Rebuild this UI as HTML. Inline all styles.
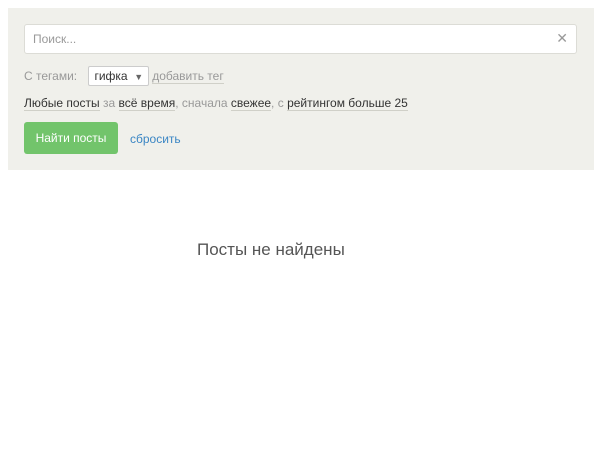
<!DOCTYPE html><html><head><style>
body{margin:0;background:#fff;font-family:"Liberation Sans","DejaVu Sans",sans-serif;width:600px;height:469px;overflow:hidden;position:relative}
.panel{position:absolute;left:8px;top:8px;width:586px;height:162px;background:#f0f0eb}
.inp{position:absolute;left:16px;top:16px;width:551px;height:28px;background:#fff;border:1px solid #dcdcd6;border-radius:3px}
.inp span{position:absolute;left:8px;top:7px;font-size:12px;color:#999}
.x{position:absolute;right:8px;top:5px;font-size:14px;color:#999}
.t{position:absolute;font-size:12px;color:#999;white-space:nowrap}
.d{color:#333;border-bottom:1px solid #d0d0c8}
.sel{display:inline-block;border:1px solid #ccc;border-radius:2px;background:#fff;color:#333;padding:2px 5px;margin:0 3px 0 8px}
.btn{position:absolute;left:16px;top:114px;width:94px;height:32px;background:#72c46b;border-radius:3px;color:#fff;font-size:12px;line-height:32px;text-align:center}
</style></head><body>
<div class="panel">
<div class="inp"><span>Поиск...</span><div class="x">✕</div></div>
<div class="t" style="left:16px;top:58px">С тегами: <span class="sel">гифка &nbsp;<span style="font-size:9px;color:#666">▼</span></span><span style="border-bottom:1px solid #d0d0c8">добавить тег</span></div>
<div class="t" style="left:16px;top:88px"><span class="d">Любые посты</span> за <span class="d">всё время</span>, сначала <span class="d">свежее</span>, с <span class="d">рейтингом больше 25</span></div>
<div class="btn">Найти посты</div>
<div class="t" style="left:122px;top:124px;color:#3b86c4">сбросить</div>
</div>
<div class="t" style="left:197px;top:240px;font-size:17px;color:#555">Посты не найдены</div>
</body></html>
